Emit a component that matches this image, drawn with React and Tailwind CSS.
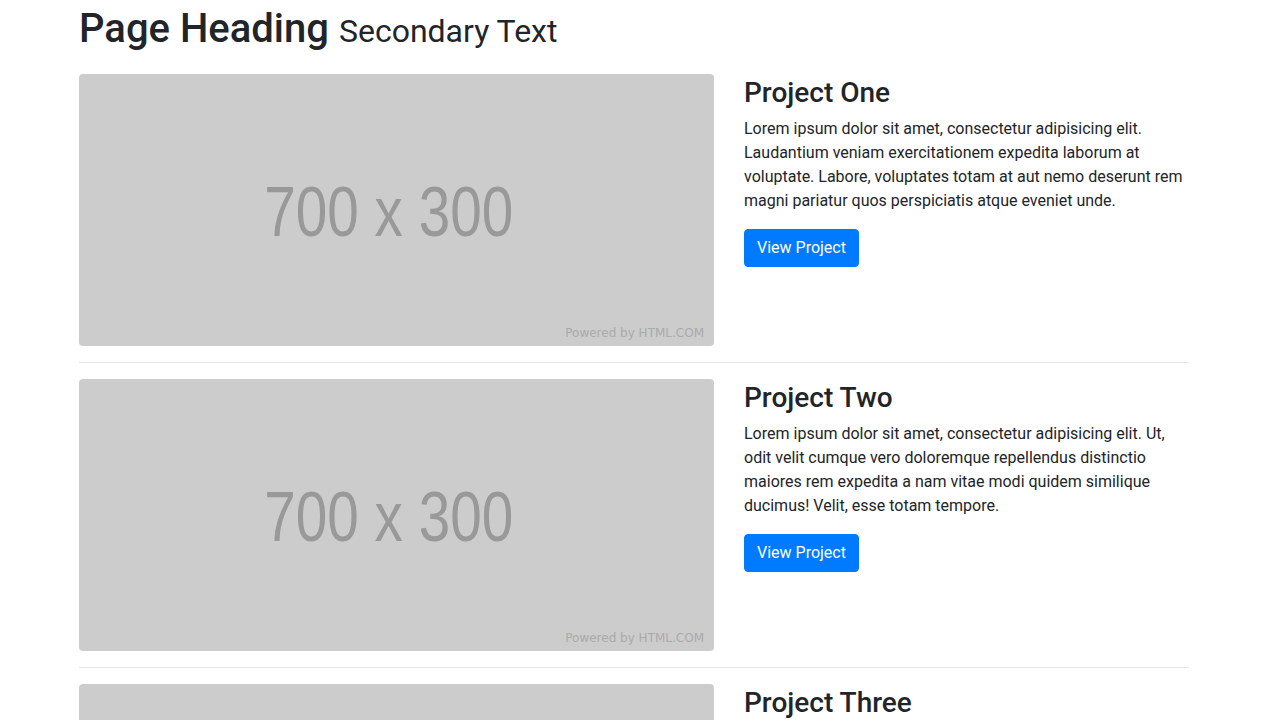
const PROJECTS = [
  {
    title: "Project One",
    text: "Lorem ipsum dolor sit amet, consectetur adipisicing elit. Laudantium veniam exercitationem expedita laborum at voluptate. Labore, voluptates totam at aut nemo deserunt rem magni pariatur quos perspiciatis atque eveniet unde.",
  },
  {
    title: "Project Two",
    text: "Lorem ipsum dolor sit amet, consectetur adipisicing elit. Ut, odit velit cumque vero doloremque repellendus distinctio maiores rem expedita a nam vitae modi quidem similique ducimus! Velit, esse totam tempore.",
  },
  {
    title: "Project Three",
    text: "Lorem ipsum dolor sit amet, consectetur adipisicing elit. Omnis, temporibus, dolores, at, praesentium ut unde repudiandae voluptatum sit ab debitis suscipit fugiat natus velit excepturi amet commodi deleniti alias possimus!",
  },
];

function Placeholder() {
  return (
    <div className="relative w-[635px] h-[272px] shrink-0 rounded bg-[#cccccc] flex items-center justify-center overflow-hidden">
      <span className="font-['Liberation_Sans',Arial,sans-serif] text-[70px] leading-none text-[#999999] scale-x-[0.81] -ml-[16px] mt-[4px] whitespace-nowrap">
        700 x 300
      </span>
      <span className="absolute right-[10px] bottom-[7px] font-['DejaVu_Sans',sans-serif] text-[12px] leading-none text-[#aaaaaa]">
        Powered by HTML.COM
      </span>
    </div>
  );
}

export default function App() {
  return (
    <div className="min-h-screen bg-white text-[#212529] font-['Roboto',sans-serif]">
      <div className="ml-[79px] w-[1110px]">
        <h1 className="text-[40px] leading-[1.2] font-medium mt-[5px] mb-[21px]">
          Page Heading <small className="text-[32px] font-normal">Secondary Text</small>
        </h1>
        {PROJECTS.map((p, i) => (
          <div key={p.title}>
            {i > 0 && <hr className="my-4 border-0 border-t border-[#e5e5e5]" />}
            <div className="flex gap-[30px]">
              <Placeholder />
              <div className="w-[445px] pt-[2px]">
                <h3 className="text-[28px] leading-[1.2] font-medium mb-[7px]">{p.title}</h3>
                <p className="text-base leading-6 mb-4">{p.text}</p>
                <button className="bg-[#007bff] text-white text-base leading-6 px-3 py-[6px] rounded border border-[#007bff]">
                  View Project
                </button>
              </div>
            </div>
          </div>
        ))}
      </div>
    </div>
  );
}
